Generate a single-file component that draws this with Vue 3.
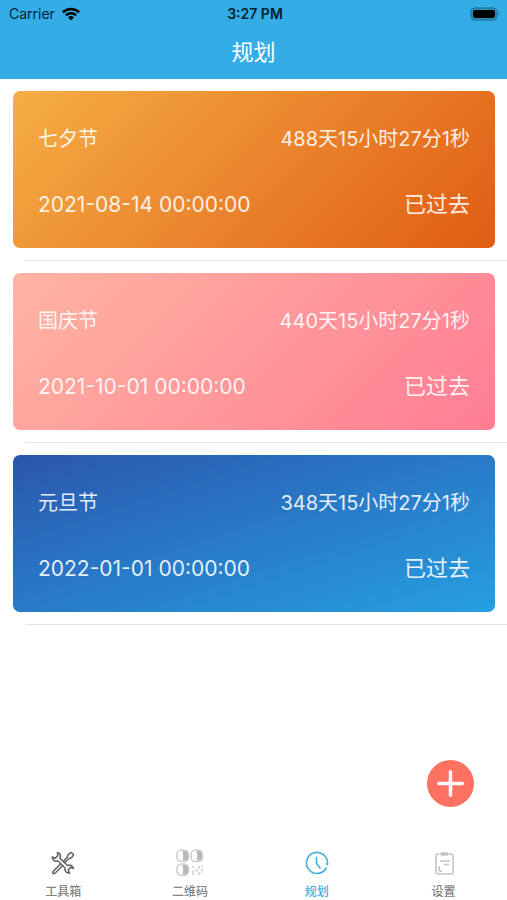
<template>
  <div class="app">
    <header class="header">
      <div class="status-bar">
        <div class="carrier">
          <span>Carrier</span>
          <svg class="wifi" viewBox="0 0 18 14" aria-hidden="true">
            <path d="M0 4.4A12.8 12.8 0 0 1 18 4.4L16.2 6.3A10.2 10.2 0 0 0 1.8 6.3Z" />
            <path d="M3 7.5A8.5 8.5 0 0 1 15 7.5L13.2 9.3A6 6 0 0 0 4.8 9.3Z" />
            <path d="M6 10.5A4.3 4.3 0 0 1 12 10.5L9 13.6Z" />
          </svg>
        </div>
        <div class="clock">3:27 PM</div>
        <div class="battery">
          <svg viewBox="0 0 31 14" aria-hidden="true">
            <rect x="1" y="1" width="26" height="12" rx="4" fill="#2b8fbd" stroke="#237ba5" stroke-width="1.4" />
            <rect x="3" y="3" width="22" height="8" rx="2" fill="#000" />
            <path d="M28.5 5Q31 7 28.5 9Z" fill="#237ba5" />
          </svg>
        </div>
      </div>
      <h1 class="title">规划</h1>
    </header>

    <main class="content">
      <ul class="plans">
        <li v-for="plan in plans" :key="plan.name" class="plan">
          <div class="card" :class="plan.theme">
            <div class="row">
              <span>{{ plan.name }}</span>
              <span>{{ plan.duration }}</span>
            </div>
            <div class="row large">
              <time>{{ plan.date }}</time>
              <span>已过去</span>
            </div>
          </div>
        </li>
      </ul>
    </main>

    <button class="add" type="button" aria-label="添加">
      <svg viewBox="0 0 46 46" aria-hidden="true">
        <path d="M23 11.5V34.5M11.5 23H34.5" />
      </svg>
    </button>

    <nav class="tabs">
      <a
        v-for="tab in tabs"
        :key="tab.id"
        href="#"
        class="tab"
        :class="{ active: tab.id === current }"
        @click.prevent="current = tab.id"
      >
        <svg v-if="tab.id === 'tools'" class="icon tools" viewBox="0 0 24 24" aria-hidden="true">
          <path d="M10 12.5L3 19.5Q1 21.5 2 22.3Q3 23.3 5 21.3L12 14.3M13 9.5L16 6.5Q17 2.5 20.5 1.5L22.5 3.5Q21.5 7 17.5 8L14.5 11Z" />
          <path d="M6.5 1.6Q10.5 3 9 7.3L16.5 14.5Q20.5 13 22.5 17.5L19.5 16.5L17.2 18.7L18.5 22.2Q13 21.5 14 17L6.8 9.8Q2.5 11.5 1.2 6L4.3 7.2L6.7 5Z" />
        </svg>
        <svg v-else-if="tab.id === 'qrcode'" class="icon qrcode" viewBox="0 0 28 28" aria-hidden="true">
          <g v-for="(spot, i) in qrSpots" :key="i" :transform="`translate(${spot[0]} ${spot[1]})`">
            <rect x="1" y="1" width="11.5" height="11.5" rx="4.5" fill="#fff" stroke="#cfcfcf" stroke-width="1.6" />
            <path d="M6.5 2H9Q12 2 12 5.5V8Q12 11.5 9 11.5H6.5Q8 6.5 6.5 2Z" fill="#b8b8b8" />
          </g>
          <path d="M17 17V19M17 21V26M20.5 20V23M23 17V20M23 23V26M26 16V18M26 20V24" stroke="#cfcfcf" stroke-width="1.4" />
        </svg>
        <svg v-else-if="tab.id === 'plan'" class="icon plan-icon" viewBox="0 0 24 24" aria-hidden="true">
          <path d="M21.2 17A10.5 10.5 0 1 1 22.5 12V13M11.5 6.5V12.5L15 17" />
          <circle cx="22.2" cy="13" r="1.2" fill="currentColor" stroke="none" />
        </svg>
        <svg v-else class="icon settings" viewBox="0 0 24 24" aria-hidden="true">
          <path d="M7.5 3H6Q4 3 4 5V21Q4 23 6 23H19Q21 23 21 21V5Q21 3 19 3H17" />
          <rect x="9" y="2" width="7" height="2" rx="1" fill="#c4c4c4" />
          <path d="M8 10H18M12 13.5H17M7 15V18Q7 20.5 10 20.5" />
        </svg>
        <span>{{ tab.label }}</span>
      </a>
    </nav>
  </div>
</template>

<script setup>
import { ref } from 'vue'

const current = ref('plan')

const plans = [
  { name: '七夕节', duration: '488天15小时27分1秒', date: '2021-08-14 00:00:00', theme: 'orange' },
  { name: '国庆节', duration: '440天15小时27分1秒', date: '2021-10-01 00:00:00', theme: 'pink' },
  { name: '元旦节', duration: '348天15小时27分1秒', date: '2022-01-01 00:00:00', theme: 'blue' }
]

const tabs = [
  { id: 'tools', label: '工具箱' },
  { id: 'qrcode', label: '二维码' },
  { id: 'plan', label: '规划' },
  { id: 'settings', label: '设置' }
]

const qrSpots = [[0, 0], [14, 0], [0, 14]]
</script>

<style>
body {
  margin: 0;
  background: #fff;
}
</style>

<style scoped>
.app {
  display: flex;
  flex-direction: column;
  min-height: 100vh;
  font-family: Inter, "Noto Sans CJK SC", sans-serif;
}

.header {
  background: #34ade7;
  padding-bottom: 5px;
}

.status-bar {
  display: grid;
  grid-template-columns: 1fr auto 1fr;
  align-items: center;
  height: 28px;
  padding: 0 6px 0 9px;
  font-size: 14px;
  line-height: 20px;
  color: #06202d;
}

.carrier {
  display: flex;
  align-items: center;
  gap: 7px;
}

.wifi {
  width: 18px;
  height: 14px;
  fill: #000;
}

.clock {
  font-weight: 600;
}

.battery {
  display: flex;
  justify-content: flex-end;
}

.battery svg {
  width: 31px;
  height: 14px;
}

.title {
  margin: 0;
  padding-top: 2px;
  font-size: 22px;
  font-weight: 400;
  line-height: 44px;
  text-align: center;
  color: #fff;
}

.content {
  flex: 1;
}

.plans {
  margin: 0;
  padding: 0;
  list-style: none;
}

.plan {
  padding: 12px 12px 0 13px;
}

/* Separador con sangría a la izquierda */
.plan::after {
  content: "";
  display: block;
  height: 1px;
  margin: 12px -12px 0 12px;
  background: #e6e6e8;
}

.card {
  display: flex;
  flex-direction: column;
  gap: 34px;
  padding: 33px 25px 28px;
  border-radius: 7px;
  color: rgba(255, 255, 255, 0.9);
}

.orange {
  background: linear-gradient(135deg, #f5ae45, #e05c14);
}

.pink {
  background: linear-gradient(135deg, #ffb4a2, #ff7d94);
}

.blue {
  background: linear-gradient(to bottom right, #2b56ae, #269fe0);
}

.row {
  display: flex;
  align-items: center;
  justify-content: space-between;
  font-size: 20px;
  line-height: 31px;
  white-space: nowrap;
}

.large {
  font-size: 22px;
}

.large time {
  font-size: 21px;
}

.add {
  position: fixed;
  right: 33px;
  bottom: 93px;
  width: 47px;
  height: 47px;
  padding: 0;
  border: none;
  border-radius: 50%;
  background: #ff7261;
  cursor: pointer;
}

.add svg {
  display: block;
  width: 100%;
  fill: none;
  stroke: #fff;
  stroke-width: 3.4;
  stroke-linecap: round;
}

.tabs {
  position: sticky;
  bottom: 0;
  display: flex;
  background: #fff;
}

.tab {
  flex: 1;
  display: flex;
  flex-direction: column;
  align-items: center;
  gap: 6px;
  font-size: 12px;
  font-weight: 500;
  line-height: 17px;
  color: #858585;
  text-decoration: none;
}

.tab.active {
  color: #44b0e3;
}

.icon {
  width: 24px;
  height: 28px;
  fill: none;
  stroke: currentColor;
  stroke-width: 1.6;
  stroke-linejoin: round;
}

.tools {
  stroke: #666;
}

.qrcode {
  width: 28px;
  stroke: none;
}

.plan-icon {
  stroke-linecap: round;
}

.settings {
  stroke: #c4c4c4;
}
</style>
